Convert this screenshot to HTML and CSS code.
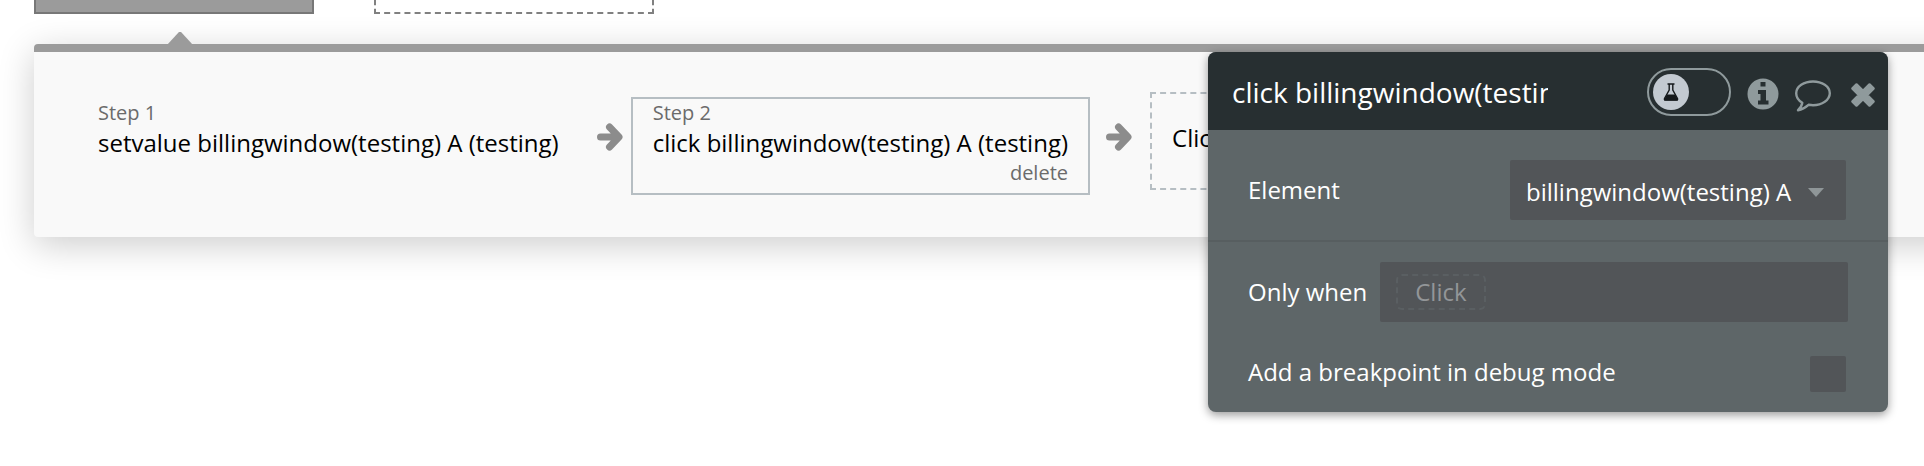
FILE: index.html
```html
<!DOCTYPE html>
<html lang="en">
<head>
<meta charset="utf-8">
<title>Workflow editor</title>
<link rel="stylesheet" href="styles.css">
</head>
<body>
<main class="workflow">
  <div class="events">
    <div class="event event-selected"></div>
    <div class="event event-placeholder"></div>
  </div>
  <section class="actions">
    <span class="pointer"></span>
    <ol class="steps">
      <li class="step">
        <span class="step-label">Step 1</span>
        <span class="step-name">setvalue billingwindow(testing) A (testing)</span>
      </li>
      <li class="arrow" aria-hidden="true">
        <svg class="arrow-icon" viewBox="0 0 26 28"><path d="M3.500 14H21M12.500 4L22 14L12.500 24" /></svg>
      </li>
      <li class="step step-selected">
        <span class="step-label">Step 2</span>
        <span class="step-name">click billingwindow(testing) A (testing)</span>
        <button class="delete" type="button">delete</button>
      </li>
      <li class="arrow arrow-last" aria-hidden="true">
        <svg class="arrow-icon" viewBox="0 0 26 28"><path d="M3.500 14H21M12.500 4L22 14L12.500 24" /></svg>
      </li>
      <li class="add-step"><button class="add-button" type="button">Click here to add an action...</button></li>
    </ol>
  </section>
</main>

<aside class="editor">
  <header class="editor-head">
    <input class="title" type="text" aria-label="Action name" value="click billingwindow(testing) A">
    <div class="tools">
      <label class="toggle">
        <input class="toggle-input" type="checkbox" role="switch" aria-label="Test mode">
        <span class="knob">
          <svg class="flask" viewBox="0 0 16 18"><path d="M4.500 1H11.500M6.200 1V7L1.500 15.500Q1 17 2.500 17H13.500Q15 17 14.500 15.500L9.800 7V1" fill="none" stroke="#15191b" stroke-width="1.400"/><path d="M4 11.500H12L15 16.500V17.500H1V16.500Z" fill="#15191b"/></svg>
        </span>
      </label>
      <button class="tool tool-info" type="button" aria-label="Info">
        <svg viewBox="0 0 32 32"><circle cx="16" cy="16" r="15.500" fill="#8f9a9c"/><path d="M13.500 4H18.500V8.500H13.500ZM11 12H19V22.500H21.500V26.500H11V22.500H13.500V16H11Z" fill="#272f31"/></svg>
      </button>
      <button class="tool tool-comment" type="button" aria-label="Comment">
        <svg viewBox="0 0 36 32"><path d="M18 1.500C27 1.500 34.800 6.500 34.800 13.300S27 25.200 18 25.200C16.500 25.200 15 25 13.500 24.800C10.500 27.500 7 29.500 3 30.200C5.500 28 6.800 26 7.300 22.800C3.600 20.600 1.200 17.300 1.200 13.300C1.200 6.500 9 1.500 18 1.500Z" fill="none" stroke="#8f9a9c" stroke-width="2.400" stroke-linejoin="round"/></svg>
      </button>
      <button class="tool tool-close" type="button" aria-label="Close">
        <svg viewBox="0 0 24 24"><path d="M5.500 1.500L12 8L18.500 1.500L22.500 5.500L16 12L22.500 18.500L18.500 22.500L12 16L5.500 22.500L1.500 18.500L8 12L1.500 5.500Z" fill="#8f9a9c" stroke="#8f9a9c" stroke-width="2.500" stroke-linejoin="round"/></svg>
      </button>
    </div>
  </header>
  <div class="row row-element">
    <label for="element">Element</label>
    <div class="select-wrap">
      <select class="select" id="element"><option>billingwindow(testing) A</option></select>
      <span class="caret"></span>
    </div>
  </div>
  <div class="row row-when">
    <span id="when-label">Only when</span>
    <div class="composer" role="group" aria-labelledby="when-label">
      <button class="chip" type="button">Click</button>
    </div>
  </div>
  <div class="row row-break">
    <label class="break-label" for="breakpoint">Add a breakpoint in debug mode</label>
    <input class="check" id="breakpoint" type="checkbox">
  </div>
</aside>
</body>
</html>
```
FILE: styles.css
```css
* {
  box-sizing: border-box;
}

body {
  margin: 0;
  background: #fff;
  color: #000;
  font-family: "Open Sans", sans-serif;
  font-size: 24px;
  line-height: 32px;
}

button,
input,
select {
  margin: 0;
  padding: 0;
  border: 0;
  border-radius: 0;
  background: none;
  color: inherit;
  font: inherit;
}

.workflow {
  min-height: 100vh;
  padding-left: 34px;
  overflow: hidden;
}

.events {
  display: flex;
  gap: 60px;
}

.event {
  width: 280px;
  height: 14px;
}

.event-selected {
  border: 2px solid #777;
  border-top: 0;
  background: #9b9b9b;
}

.event-placeholder {
  border: 2px dashed #808080;
  border-top: 0;
}

.actions {
  position: relative;
  margin-top: 30px;
  margin-right: -40px;
  border-top: 8px solid #9b9b9b;
  border-radius: 4px;
  background: #f9f9f9;
  box-shadow: 0 8px 36px rgba(0, 0, 0, 0.2);
}

.pointer {
  position: absolute;
  top: -20px;
  left: 133px;
  width: 26px;
  height: 13px;
  background: #9b9b9b;
  clip-path: polygon(46% 0, 54% 0, 100% 100%, 0 100%);
}

.steps {
  display: flex;
  align-items: flex-start;
  margin: 0;
  padding: 40px 0 42px 42px;
  list-style: none;
  white-space: nowrap;
}

.step {
  display: flex;
  flex-direction: column;
  margin-top: 5px;
  padding: 0 20px 6px;
  border: 2px solid transparent;
}

.step-selected {
  border-color: #b6bec3;
}

.step-label,
.delete {
  color: #6b6b6b;
  font-size: 20px;
  line-height: 28px;
}

.delete {
  align-self: flex-end;
}

.arrow {
  width: 50px;
  padding: 31px 0 0 16px;
}

.arrow-last {
  width: 60px;
}

.arrow-icon {
  display: block;
  width: 26px;
  height: 28px;
  fill: none;
  stroke: #8c8c8c;
  stroke-width: 7;
  stroke-linecap: round;
  stroke-linejoin: round;
}

.add-step {
  border: 2px dashed #b6bec3;
}

.add-button {
  height: 94px;
  padding: 0 20px 6px;
}

.editor {
  position: absolute;
  top: 52px;
  right: 36px;
  width: 680px;
  border-radius: 8px;
  background: #5e6668;
  color: #fff;
  box-shadow: 0 3px 10px rgba(0, 0, 0, 0.4);
}

.editor-head {
  display: flex;
  align-items: center;
  justify-content: space-between;
  height: 78px;
  padding: 2px 13px 0 24px;
  border-radius: 8px 8px 0 0;
  background: #272f31;
}

.title {
  width: 316px;
  height: 48px;
  font-size: 28px;
}

.tools {
  display: flex;
  align-items: center;
  gap: 16px;
}

.toggle {
  display: flex;
  position: relative;
  width: 84px;
  height: 48px;
  padding: 4px;
  border: 2px solid #8f9a9c;
  border-radius: 24px;
}

.toggle-input {
  position: absolute;
  inset: 0;
  appearance: none;
}

.knob {
  display: grid;
  place-items: center;
  width: 36px;
  height: 36px;
  border-radius: 50%;
  background: #c3cad1;
}

.flask {
  width: 16px;
  height: 18px;
}

.tool svg {
  display: block;
  width: 100%;
}

.tool-info {
  width: 32px;
  margin-top: 4px;
}

.tool-comment {
  width: 36px;
  margin-top: 8px;
}

.tool-close {
  width: 24px;
  margin: 6px 0 0 4px;
}

.row {
  display: flex;
  align-items: center;
  padding: 0 42px 0 40px;
}

.row-element {
  justify-content: space-between;
  height: 112px;
  padding-top: 10px;
  border-bottom: 2px solid #575e60;
}

.select-wrap {
  position: relative;
}

.select {
  display: block;
  width: 336px;
  height: 60px;
  padding: 4px 40px 0 16px;
  border-radius: 2px;
  background: #525558;
  appearance: none;
}

.caret {
  position: absolute;
  top: 28px;
  right: 22px;
  width: 16px;
  height: 9px;
  background: #8f9698;
  clip-path: polygon(0 0, 100% 0, 50% 100%);
  pointer-events: none;
}

.row-when {
  gap: 13px;
  padding: 20px 40px 0;
}

.composer {
  display: flex;
  flex: 1;
  align-items: center;
  height: 60px;
  padding: 0 16px;
  border-radius: 2px;
  background: #525558;
}

.chip {
  height: 36px;
  padding: 0 17px;
  border: 2px dashed #5a5f62;
  border-radius: 6px;
  color: #939698;
}

.row-break {
  justify-content: space-between;
  padding-top: 34px;
  padding-bottom: 20px;
}

.break-label {
  padding-bottom: 4px;
}

.check {
  width: 36px;
  height: 36px;
  border-radius: 2px;
  background: #525558;
  appearance: none;
}
```
